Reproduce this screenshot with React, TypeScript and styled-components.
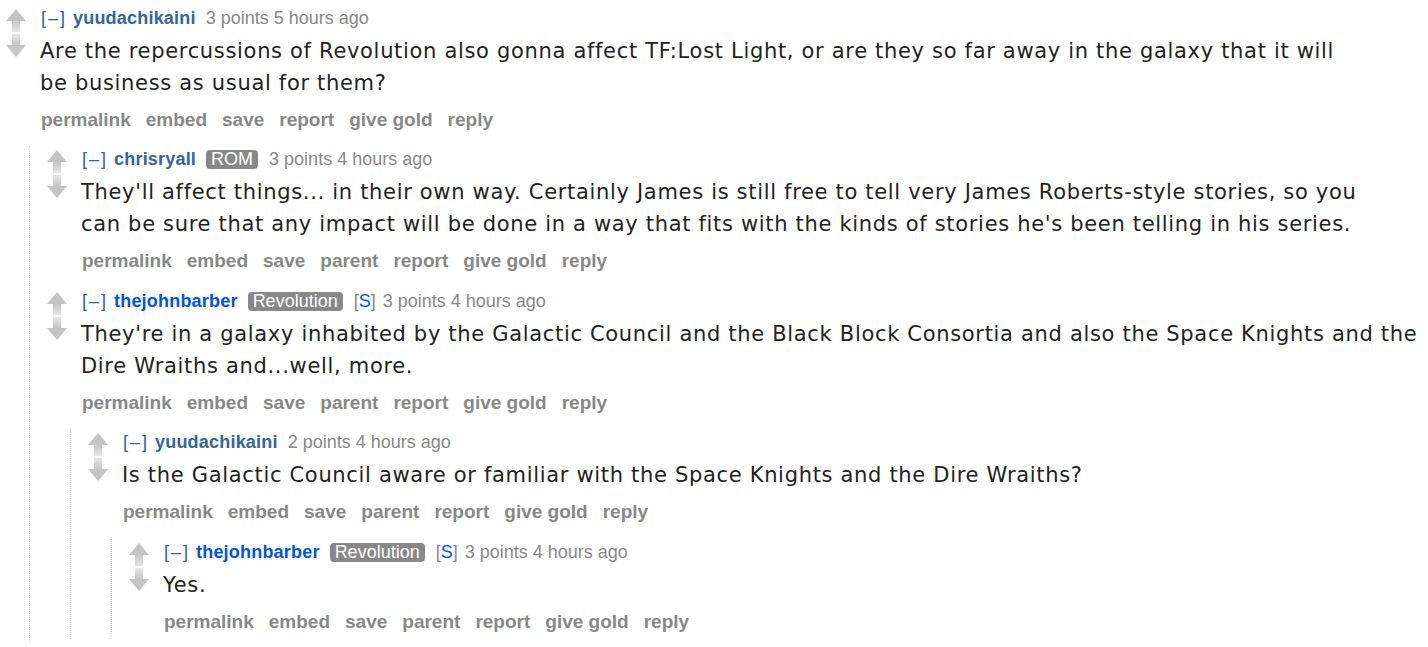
import React from 'react';
import styled, { createGlobalStyle } from 'styled-components';

const GlobalStyle = createGlobalStyle`
  html, body {
    margin: 0;
    padding: 0;
    background: #fff;
  }
  body {
    font-family: "Liberation Sans", Arial, sans-serif;
  }
`;

const Page = styled.div`
  padding-top: 7px;
  width: 1428px;
  overflow: hidden;
`;

const CommentBox = styled.div`
  display: flex;
  flex-direction: column;
`;

const Row = styled.div`
  display: flex;
  align-items: flex-start;
`;

const Midcol = styled.div`
  flex: none;
  width: 20px;
  margin: 2px 14px 0 6px;
  display: flex;
  flex-direction: column;
  gap: 2px;
`;

const Entry = styled.div`
  flex: 1;
  min-width: 0;
`;

const Tagline = styled.div`
  display: flex;
  align-items: center;
  height: 22px;
  font-size: 18px;
  color: #888;
  white-space: nowrap;
`;

const Expand = styled.span`
  color: #369;
  letter-spacing: 2px;
  margin-left: 1px;
  margin-right: 6px;
`;

const Author = styled.span<{ $submitter?: boolean }>`
  color: ${p => (p.$submitter ? '#0055df' : '#369')};
  font-weight: bold;
  letter-spacing: 0.2px;
  margin-right: 10px;
`;

const Flair = styled.span`
  background: #888;
  color: #fff;
  border-radius: 4px;
  padding: 0 5px;
  height: 19px;
  line-height: 19px;
  font-size: 18px;
  margin-right: 11px;
`;

const Submitter = styled.span`
  color: #888;
  margin-right: 7px;
  & b {
    color: #0055df;
    font-weight: normal;
  }
`;

const Meta = styled.span`
  color: #888;
`;

const Body = styled.div`
  margin-top: 6px;
  font-family: "DejaVu Sans", Verdana, sans-serif;
  font-size: 21px;
  letter-spacing: 0.68px;
  line-height: 32px;
  color: #222;
  white-space: nowrap;
`;

const Buttons = styled.ul`
  list-style: none;
  margin: 10px 0 0;
  padding: 0 0 0 1px;
  display: flex;
  gap: 15px;
  height: 22px;
  align-items: center;
  font-size: 19px;
  font-weight: bold;
  color: #888;
  white-space: nowrap;
`;

const Child = styled.div<{ $top: number }>`
  margin-left: 29px;
  margin-top: ${p => p.$top}px;
  padding: 2px 0 3px 11px;
  border-left: 1px dotted #ccd;
  display: flex;
  flex-direction: column;
  gap: 18px;
`;

const Arrow = ({ down }: { down?: boolean }) => (
  <svg width="20" height="23" viewBox="0 0 20 23" style={down ? { transform: 'scaleY(-1)' } : undefined}>
    <defs>
      <linearGradient id={down ? 'gd' : 'gu'} x1="0" y1="0" x2="0" y2="1">
        <stop offset="0.5" stopColor="#c4c4c4" />
        <stop offset="1" stopColor="#e6e6e6" />
      </linearGradient>
    </defs>
    <polygon points="10,0 20,12 14,12 14,23 6,23 6,12 0,12" fill={`url(#${down ? 'gd' : 'gu'})`} />
  </svg>
);

interface CommentData {
  author: string;
  submitter?: boolean;
  flair?: string;
  points: number;
  time: string;
  lines: string[];
  parent?: boolean;
  replies?: CommentData[];
  childTop?: number;
}

const thread: CommentData = {
  author: 'yuudachikaini',
  points: 3,
  time: '5 hours ago',
  lines: [
    'Are the repercussions of Revolution also gonna affect TF:Lost Light, or are they so far away in the galaxy that it will',
    'be business as usual for them?',
  ],
  childTop: 15,
  replies: [
    {
      author: 'chrisryall',
      flair: 'ROM',
      points: 3,
      time: '4 hours ago',
      parent: true,
      lines: [
        "They'll affect things... in their own way. Certainly James is still free to tell very James Roberts-style stories, so you",
        "can be sure that any impact will be done in a way that fits with the kinds of stories he's been telling in his series.",
      ],
    },
    {
      author: 'thejohnbarber',
      submitter: true,
      flair: 'Revolution',
      points: 3,
      time: '4 hours ago',
      parent: true,
      childTop: 15,
      lines: [
        "They're in a galaxy inhabited by the Galactic Council and the Black Block Consortia and also the Space Knights and the",
        'Dire Wraiths and...well, more.',
      ],
      replies: [
        {
          author: 'yuudachikaini',
          points: 2,
          time: '4 hours ago',
          parent: true,
          childTop: 16,
          lines: ['Is the Galactic Council aware or familiar with the Space Knights and the Dire Wraiths?'],
          replies: [
            {
              author: 'thejohnbarber',
              submitter: true,
              flair: 'Revolution',
              points: 3,
              time: '4 hours ago',
              parent: true,
              lines: ['Yes.'],
            },
          ],
        },
      ],
    },
  ],
};

const Comment = ({ c }: { c: CommentData }) => {
  const buttons = ['permalink', 'embed', 'save'];
  if (c.parent) buttons.push('parent');
  buttons.push('report', 'give gold', 'reply');
  return (
    <CommentBox>
      <Row>
        <Midcol>
          <Arrow />
          <Arrow down />
        </Midcol>
        <Entry>
          <Tagline>
            <Expand>[–]</Expand>
            <Author $submitter={c.submitter}>{c.author}</Author>
            {c.flair && <Flair>{c.flair}</Flair>}
            {c.submitter && (
              <Submitter>
                [<b>S</b>]
              </Submitter>
            )}
            <Meta>
              {c.points} points {c.time}
            </Meta>
          </Tagline>
          <Body>
            {c.lines.map((l, i) => (
              <div key={i}>{l}</div>
            ))}
          </Body>
          <Buttons>
            {buttons.map(b => (
              <li key={b}>{b}</li>
            ))}
          </Buttons>
        </Entry>
      </Row>
      {c.replies && (
        <Child $top={c.childTop ?? 15}>
          {c.replies.map((r, i) => (
            <Comment key={i} c={r} />
          ))}
        </Child>
      )}
    </CommentBox>
  );
};

export default function App() {
  return (
    <Page>
      <GlobalStyle />
      <Comment c={thread} />
    </Page>
  );
}
